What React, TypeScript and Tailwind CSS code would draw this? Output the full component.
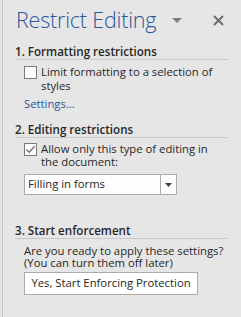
import React from 'react';

const font = { fontFamily: '"Open Sans", "Noto Sans", sans-serif' };

const Check: React.FC<{ checked?: boolean }> = ({ checked }) => (
  <span className="mt-[1px] flex h-[13px] w-[13px] shrink-0 items-center justify-center border border-[#7a7a7a] bg-[#fdfdfd]">
    {checked && (
      <svg width="11" height="11" viewBox="0 0 11 11">
        <path d="M1.5 5.5 L4.2 8.3 L9.6 2.2" fill="none" stroke="#6e6e6e" strokeWidth="1.3" />
      </svg>
    )}
  </span>
);

const Heading: React.FC<{ children: React.ReactNode }> = ({ children }) => (
  <div className="mr-[13px] border-b border-[#c8c8c8] text-[11.6px] font-semibold leading-[15px] text-[#262626]">
    {children}
  </div>
);

export default function App() {
  return (
    <div className="h-[317px] w-[241px] bg-[#e6e6e6] pl-[2px]" style={font}>
      <div className="h-full border-l border-[#c6c6c6] pl-[12px] text-[11.3px] text-[#262626]">
        {/* Header */}
        <div className="flex h-[44px] items-start pt-[5px]">
          <div className="w-[157px] pl-[1px] text-[21.5px] font-light leading-[30px] tracking-[-0.2px] text-[#2b579a]">
            Restrict Editing
          </div>
          <svg className="mt-[13px]" width="10" height="6" viewBox="0 0 10 6">
            <path d="M0 0 H10 L5 5 Z" fill="#7f7f7f" />
          </svg>
          <svg className="ml-[31px] mt-[10px]" width="11" height="11" viewBox="0 0 11 11">
            <path d="M1 1 L10 10 M10 1 L1 10" stroke="#6d6d6d" strokeWidth="2" />
          </svg>
        </div>

        {/* Section 1 */}
        <Heading>1. Formatting restrictions</Heading>
        <div className="ml-[9px] mt-[5px] flex gap-[4px] pr-[14px] leading-[14px]">
          <Check />
          <span>Limit formatting to a selection of styles</span>
        </div>
        <div className="ml-[9px] mt-[4px] leading-[14px] text-[#2b579a]">Settings...</div>

        {/* Section 2 */}
        <div className="mt-[11px]">
          <Heading>2. Editing restrictions</Heading>
        </div>
        <div className="ml-[9px] mt-[4px] flex gap-[4px] pr-[20px] leading-[13px]">
          <Check checked />
          <span>Allow only this type of editing in the document:</span>
        </div>
        <div className="ml-[9px] mt-[6px] flex h-[21px] w-[153px] border border-[#ababab] bg-[#fefefe]">
          <div className="flex flex-1 items-center pl-[3px]">Filling in forms</div>
          <div className="flex w-[16px] items-center justify-center border-l border-[#ababab]">
            <svg width="7" height="4" viewBox="0 0 7 4">
              <path d="M0 0 H7 L3.5 4 Z" fill="#444" />
            </svg>
          </div>
        </div>

        {/* Section 3 */}
        <div className="mt-[28px]">
          <Heading>3. Start enforcement</Heading>
        </div>
        <div className="ml-[9px] mt-[6px] leading-[12px]">
          Are you ready to apply these settings?
          <br />
          (You can turn them off later)
        </div>
        <div className="ml-[9px] mt-[3px] flex h-[23px] w-[174px] items-center justify-center border border-[#ababab] bg-white">
          Yes, Start Enforcing Protection
        </div>
      </div>
    </div>
  );
}
